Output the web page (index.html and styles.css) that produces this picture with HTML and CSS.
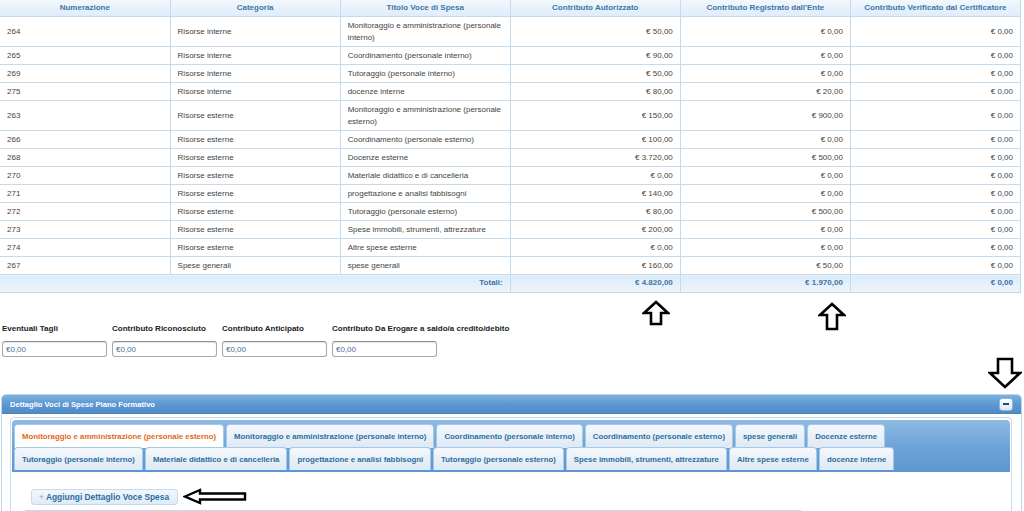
FILE: index.html
```html
<!DOCTYPE html>
<html lang="it">
<head>
<meta charset="utf-8">
<title>Dettaglio Voci di Spesa</title>
<link rel="stylesheet" href="styles.css">
</head>
<body>
<div class="page">
  <table class="grid">
    <thead>
      <tr>
        <th>Numerazione</th><th>Categoria</th><th>Titolo Voce di Spesa</th>
        <th>Contributo Autorizzato</th><th>Contributo Registrato dall'Ente</th><th>Contributo Verificato dal Certificatore</th>
      </tr>
    </thead>
    <tbody>
      <tr><td>264</td><td>Risorse interne</td><td>Monitoraggio e amministrazione (personale interno)</td><td class="r">€ 50,00</td><td class="r">€ 0,00</td><td class="r">€ 0,00</td></tr>
      <tr><td>265</td><td>Risorse interne</td><td>Coordinamento (personale interno)</td><td class="r">€ 90,00</td><td class="r">€ 0,00</td><td class="r">€ 0,00</td></tr>
      <tr><td>269</td><td>Risorse interne</td><td>Tutoraggio (personale interno)</td><td class="r">€ 50,00</td><td class="r">€ 0,00</td><td class="r">€ 0,00</td></tr>
      <tr><td>275</td><td>Risorse interne</td><td>docenze interne</td><td class="r">€ 80,00</td><td class="r">€ 20,00</td><td class="r">€ 0,00</td></tr>
      <tr><td>263</td><td>Risorse esterne</td><td>Monitoraggio e amministrazione (personale esterno)</td><td class="r">€ 150,00</td><td class="r">€ 900,00</td><td class="r">€ 0,00</td></tr>
      <tr><td>266</td><td>Risorse esterne</td><td>Coordinamento (personale esterno)</td><td class="r">€ 100,00</td><td class="r">€ 0,00</td><td class="r">€ 0,00</td></tr>
      <tr><td>268</td><td>Risorse esterne</td><td>Docenze esterne</td><td class="r">€ 3.720,00</td><td class="r">€ 500,00</td><td class="r">€ 0,00</td></tr>
      <tr><td>270</td><td>Risorse esterne</td><td>Materiale didattico e di cancelleria</td><td class="r">€ 0,00</td><td class="r">€ 0,00</td><td class="r">€ 0,00</td></tr>
      <tr><td>271</td><td>Risorse esterne</td><td>progettazione e analisi fabbisogni</td><td class="r">€ 140,00</td><td class="r">€ 0,00</td><td class="r">€ 0,00</td></tr>
      <tr><td>272</td><td>Risorse esterne</td><td>Tutoraggio (personale esterno)</td><td class="r">€ 80,00</td><td class="r">€ 500,00</td><td class="r">€ 0,00</td></tr>
      <tr><td>273</td><td>Risorse esterne</td><td>Spese immobili, strumenti, attrezzature</td><td class="r">€ 200,00</td><td class="r">€ 0,00</td><td class="r">€ 0,00</td></tr>
      <tr><td>274</td><td>Risorse esterne</td><td>Altre spese esterne</td><td class="r">€ 0,00</td><td class="r">€ 0,00</td><td class="r">€ 0,00</td></tr>
      <tr><td>267</td><td>Spese generali</td><td>spese generali</td><td class="r">€ 160,00</td><td class="r">€ 50,00</td><td class="r">€ 0,00</td></tr>
    </tbody>
    <tfoot>
      <tr><td colspan="3" class="r">Totali:</td><td class="r">€ 4.820,00</td><td class="r">€ 1.970,00</td><td class="r">€ 0,00</td></tr>
    </tfoot>
  </table>

  <div class="fields">
    <div class="field"><label>Eventuali Tagli</label><input class="inp" value="€0,00"></div>
    <div class="field"><label>Contributo Riconosciuto</label><input class="inp" value="€0,00"></div>
    <div class="field"><label>Contributo Anticipato</label><input class="inp" value="€0,00"></div>
    <div class="field wide"><label>Contributo Da Erogare a saldo/a credito/debito</label><input class="inp" value="€0,00"></div>
  </div>

  <div class="panel">
    <div class="panel-head">
      <span class="panel-title">Dettaglio Voci di Spese Piano Formativo</span>
      <span class="minbtn"><span class="minbar"></span></span>
    </div>
    <div class="panel-body">
      <div class="tabs">
        <div class="nav">
          <div class="tabrow">
            <span class="tab active">Monitoraggio e amministrazione (personale esterno)</span>
            <span class="tab">Monitoraggio e amministrazione (personale interno)</span>
            <span class="tab">Coordinamento (personale interno)</span>
            <span class="tab">Coordinamento (personale esterno)</span>
            <span class="tab">spese generali</span>
            <span class="tab">Docenze esterne</span>
          </div>
          <div class="tabrow">
            <span class="tab">Tutoraggio (personale interno)</span>
            <span class="tab">Materiale didattico e di cancelleria</span>
            <span class="tab">progettazione e analisi fabbisogni</span>
            <span class="tab">Tutoraggio (personale esterno)</span>
            <span class="tab">Spese immobili, strumenti, attrezzature</span>
            <span class="tab">Altre spese esterne</span>
            <span class="tab">docenze interne</span>
          </div>
        </div>
        <div class="tabpanel">
          <button class="addbtn"><span class="plus">+</span> Aggiungi Dettaglio Voce Spesa</button>
          <div class="subgrid"></div>
        </div>
      </div>
    </div>
  </div>

  <svg class="arrow up1" width="28" height="26" viewBox="0 0 28 26"><polygon points="14,2 26,13 19,13 19,24 9,24 9,13 2,13" fill="#fff" stroke="#000" stroke-width="2.6" stroke-linejoin="miter"/></svg>
  <svg class="arrow up2" width="28" height="29" viewBox="0 0 28 29"><polygon points="14,2 26,13 19,13 19,27 9,27 9,13 2,13" fill="#fff" stroke="#000" stroke-width="2.6" stroke-linejoin="miter"/></svg>
  <svg class="arrow down" width="34" height="32" viewBox="0 0 34 32"><polygon points="10,2 24,2 24,16 32,16 17,30 2,16 10,16" fill="#fff" stroke="#000" stroke-width="2.6" stroke-linejoin="miter"/></svg>
  <svg class="arrow left" width="64" height="17" viewBox="0 0 64 17"><polygon points="2,8.5 17,2 17,5.5 62,5.5 62,11.5 17,11.5 17,15" fill="#fff" stroke="#000" stroke-width="2.4" stroke-linejoin="miter"/></svg>
</div>
</body>
</html>
```

FILE: styles.css
```css
html, body {
  margin: 0;
  padding: 0;
  background: #fff;
}
body {
  font-family: "Liberation Sans", Arial, sans-serif;
  font-size: 8px;
  color: #333;
}
.page {
  position: relative;
  width: 1024px;
  height: 511px;
  overflow: hidden;
}

/* ---------- table ---------- */
.grid {
  width: 1021px;
  border-collapse: collapse;
  table-layout: fixed;
}
.grid th, .grid td {
  border: 1px solid #c5dbec;
  padding: 3px 7px 2px;
  line-height: 12px;
  text-align: left;
  vertical-align: middle;
}
.grid th {
  padding: 2px 7px;
  background: linear-gradient(#f1f7fd, #dfecf8);
  color: #3d76a8;
  font-weight: bold;
  text-align: center;
  white-space: nowrap;
  border-top: 0;
}
.grid th:first-child, .grid td:first-child { border-left: 0; }
.grid td { color: #444; background: #fff; }
.grid td.r { text-align: right; }
.grid tfoot td {
  background: linear-gradient(#dcebf9, #edf5fd);
  color: #3d76a8;
  font-weight: bold;
  padding: 2px 7px 3px;
}

/* ---------- fields ---------- */
.fields {
  display: flex;
  padding: 31px 0 0 2px;
}
.field {
  width: 110px;
  display: flex;
  flex-direction: column;
}
.field.wide { width: auto; }
.field label {
  font-weight: bold;
  color: #222;
  white-space: nowrap;
  line-height: 10px;
  margin-bottom: 7px;
}
.inp {
  box-sizing: border-box;
  width: 105px;
  height: 16px;
  margin: 0;
  padding: 0 0 0 3px;
  border: 1px solid #a9a9a9;
  border-top-color: #8f8f8f;
  border-radius: 3px;
  box-shadow: inset 0 1px 1px rgba(0,0,0,0.12);
  font-family: "Liberation Sans", Arial, sans-serif;
  font-size: 8px;
  color: #4c6f99;
  background: #fff;
}

/* ---------- panel ---------- */
.panel {
  margin: 37px 2px 0 1px;
  border: 1px solid #b9d4ec;
  border-radius: 5px 5px 0 0;
  background: #fff;
  height: 200px;
}
.panel-head {
  height: 18px;
  display: flex;
  align-items: center;
  justify-content: space-between;
  padding: 0 8px 0 8px;
  background: linear-gradient(#7fb2e0 0%, #5f9ad3 45%, #4f8bc8 100%);
  border-radius: 4px 4px 0 0;
  border-bottom: 1px solid #4a82bb;
}
.panel-title {
  color: #fff;
  font-weight: bold;
  font-size: 7.6px;
}
.minbtn {
  width: 12px;
  height: 11px;
  background: linear-gradient(#ffffff, #dde9f5);
  border: 1px solid #8fb6dc;
  border-radius: 3px;
  display: flex;
  align-items: center;
  justify-content: center;
}
.minbar {
  width: 6px;
  height: 2px;
  background: #2b4a6b;
}
.panel-body {
  padding: 3px 9px 0 8px;
}
.tabs {
  border: 1px solid #c7dcef;
  border-radius: 4px;
  padding: 2px 1px 0;
  height: 120px;
}
.nav {
  background: linear-gradient(#8ebae2 0%, #6fa4d8 50%, #5c96d0 100%);
  border-radius: 4px 4px 0 0;
  padding: 4px 2px 0 2px;
  height: 48px;
}
.tabrow {
  display: flex;
  gap: 2px;
}
.tab {
  box-sizing: border-box;
  height: 24px;
  margin-bottom: -1px;
  padding: 0 7px;
  display: flex;
  align-items: center;
  white-space: nowrap;
  font-weight: bold;
  font-size: 7.8px;
  color: #2e6e9e;
  background: linear-gradient(#f4f8fc, #dde9f5);
  border: 1px solid #a7c8e6;
  border-bottom: 0;
  border-radius: 4px 4px 0 0;
}
.tabrow + .tabrow .tab { height: 23px; }
.tab.active {
  background: #fff;
  color: #e1691c;
}
.tabpanel {
  padding: 17px 0 0 19px;
}
.addbtn {
  height: 16px;
  padding: 0 8px 0 7px;
  font-family: "Liberation Sans", Arial, sans-serif;
  font-size: 8.4px;
  font-weight: bold;
  color: #2e6e9e;
  background: linear-gradient(#f1f7fc, #dfebf7);
  border: 1px solid #c5dbec;
  border-radius: 3px;
  line-height: 14px;
}
.plus { color: #8aa6c4; font-weight: normal; }
.subgrid {
  margin: 5px 0 0 -6px;
  width: 776px;
  border-top: 1px solid #c5dbec;
  height: 10px;
}

/* ---------- annotation arrows ---------- */
.arrow { position: absolute; }
.up1 { left: 642px; top: 300px; }
.up2 { left: 818px; top: 302px; }
.down { left: 988px; top: 357px; }
.left { left: 183px; top: 488px; }
```
